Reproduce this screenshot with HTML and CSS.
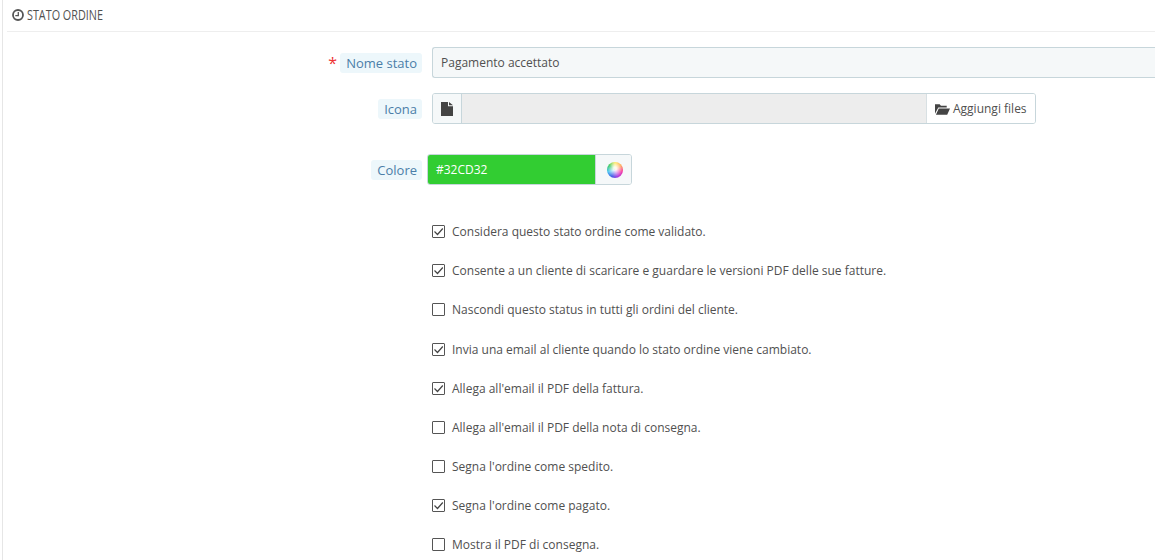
FILE: index.html
```
<!DOCTYPE html>
<html lang="it">
<head>
<meta charset="utf-8">
<title>Stato ordine</title>
<link rel="stylesheet" href="styles.css">
</head>
<body>
<main class="panel">
  <h2 class="panel-heading">
    <svg class="clock" viewBox="0 0 12 12" width="12" height="12"><circle cx="6" cy="6" r="5" fill="none" stroke="#555" stroke-width="1.800"/><path d="M6.300 3v3.600H3.300" fill="none" stroke="#555" stroke-width="1.300"/></svg>
    <span class="heading-text">STATO ORDINE</span>
  </h2>
  <form class="form">
    <div class="row row-name">
      <div class="label-col"><span class="req">*</span><span class="label">Nome stato</span></div>
      <div class="text-input">Pagamento accettato</div>
    </div>
    <div class="row row-icon">
      <div class="label-col"><span class="label">Icona</span></div>
      <div class="file-group">
        <span class="file-addon">
          <svg viewBox="0 0 12 14" width="12" height="14"><path d="M0 0h7v4.200h5V14H0zM8 0l4 3.300H8z" fill="#444"/></svg>
        </span>
        <span class="file-name"></span>
        <span class="file-btn">
          <svg viewBox="0 0 16 12" width="15" height="12"><path d="M0 11V1h5l1.300 1.500h6.200v1.800H3.500zM1 12l3-6.500h12l-3 6.500z" fill="#444"/></svg>Aggiungi files
        </span>
      </div>
    </div>
    <div class="row row-color">
      <div class="label-col"><span class="label">Colore</span></div>
      <div class="color-group">
        <span class="color-value">#32CD32</span>
        <span class="color-btn"><span class="wheel"></span></span>
      </div>
    </div>
    <ul class="checks">
      <li><span class="box on"><svg viewBox="0 0 13 13" width="13" height="13"><path d="M2.500 6.500l3 3 5.300-6" fill="none" stroke="#444" stroke-width="1.200"/></svg></span>Considera questo stato ordine come validato.</li>
      <li><span class="box on"><svg viewBox="0 0 13 13" width="13" height="13"><path d="M2.500 6.500l3 3 5.300-6" fill="none" stroke="#444" stroke-width="1.200"/></svg></span>Consente a un cliente di scaricare e guardare le versioni PDF delle sue fatture.</li>
      <li><span class="box"></span>Nascondi questo status in tutti gli ordini del cliente.</li>
      <li><span class="box on"><svg viewBox="0 0 13 13" width="13" height="13"><path d="M2.500 6.500l3 3 5.300-6" fill="none" stroke="#444" stroke-width="1.200"/></svg></span>Invia una email al cliente quando lo stato ordine viene cambiato.</li>
      <li><span class="box on"><svg viewBox="0 0 13 13" width="13" height="13"><path d="M2.500 6.500l3 3 5.300-6" fill="none" stroke="#444" stroke-width="1.200"/></svg></span>Allega all'email il PDF della fattura.</li>
      <li><span class="box"></span>Allega all'email il PDF della nota di consegna.</li>
      <li><span class="box"></span>Segna l'ordine come spedito.</li>
      <li><span class="box on"><svg viewBox="0 0 13 13" width="13" height="13"><path d="M2.500 6.500l3 3 5.300-6" fill="none" stroke="#444" stroke-width="1.200"/></svg></span>Segna l'ordine come pagato.</li>
      <li><span class="box"></span>Mostra il PDF di consegna.</li>
    </ul>
  </form>
</main>
</body>
</html>
```
FILE: styles.css
```
* { box-sizing: border-box; }
html, body { margin: 0; height: 560px; overflow: hidden; background: #fff; }
body { font-family: "Open Sans", sans-serif; font-size: 12px; color: #505050; }
.panel { margin-left: 2px; border-left: 1px solid #e6e6e6; padding-left: 4px; height: 560px; }
.panel-heading {
  margin: 0; height: 32px; padding: 7px 0 0 5px; border-bottom: 1px solid #eee;
  display: flex; align-items: flex-start; gap: 3px;
  font: 400 15px/16px "Open Sans", sans-serif; color: #505050;
}
.heading-text { display: inline-block; margin-top: -1px; transform: scaleX(0.72); transform-origin: left center; white-space: nowrap; }
.clock { margin-top: 2px; }
.form { padding-top: 15px; }
.row { display: flex; align-items: center; }
.label-col { width: 415px; flex: none; display: flex; justify-content: flex-end; align-items: center; }
.req { color: #e33; font-size: 16px; line-height: 16px; margin-right: 3px; }
.label {
  font-size: 13px; line-height: 18px; height: 20px; padding: 1px 5px 0 6px; margin-top: 1px;
  color: #4b7ea8; background: #edf7fb; border-radius: 3px;
}
.row-name { height: 31px; }
.text-input {
  margin-left: 10px; flex: 1; height: 31px; padding: 0 8px; line-height: 29px; color: #505050;
  background: #f5f8f9; border: 1px solid #c7d6db; border-right: 0; border-radius: 3px 0 0 3px;
}
.row-icon { margin-top: 15px; height: 31px; }
.file-group { margin-left: 10px; width: 604px; height: 31px; display: flex; border: 1px solid #c7d6db; border-radius: 3px; overflow: hidden; }
.file-addon { width: 29px; flex: none; display: flex; align-items: center; justify-content: center; background: #f5f8f9; border-right: 1px solid #c7d6db; }
.file-name { flex: 1; background: #ededed; }
.file-btn { width: 109px; flex: none; display: flex; align-items: center; gap: 3px; padding-left: 8px; background: #fff; border-left: 1px solid #d8e0e3; color: #505050; }
.row-color { margin-top: 30px; height: 31px; }
.color-group { margin-left: 5px; width: 205px; height: 31px; display: flex; border: 1px solid #c7d6db; border-radius: 3px; overflow: hidden; }
.color-value { width: 167px; flex: none; background: #32cd32; color: #fff; padding-left: 8px; line-height: 29px; }
.color-btn { flex: 1; display: flex; align-items: center; justify-content: center; padding-left: 2px; background: #f5f8f9; border-left: 1px solid #c7d6db; }
.wheel { width: 16px; height: 16px; border-radius: 50%; background: radial-gradient(circle at 50% 42%, rgba(255,255,255,.9) 0 14%, transparent 66%), conic-gradient(#ffe640, #ff9a3c, #f52fa0, #b040e0, #4a60e8, #40c0f0, #10c040, #ffe640); }
.checks { list-style: none; margin: 27.1px 0 0; padding: 0 0 0 425px; }
.checks li { height: 39.125px; display: flex; align-items: center; gap: 7px; white-space: nowrap; }
.box { width: 13px; height: 13px; flex: none; border: 1px solid #555; border-radius: 1px; background: #fff; position: relative; display: block; }
.box svg { position: absolute; left: -1px; top: -1px; }
```
